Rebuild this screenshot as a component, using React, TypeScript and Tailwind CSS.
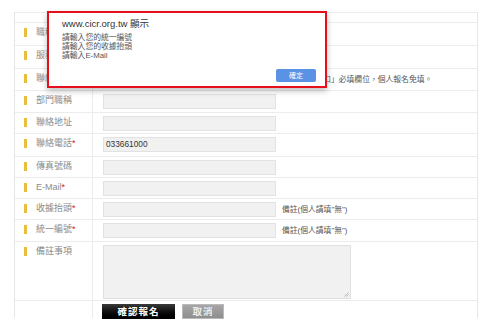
import React from 'react'

interface Row {
  label: string
  required?: boolean
  h: string
  kind: 'input' | 'textarea' | 'none'
  value?: string
  note?: string
}

const rows: Row[] = [
  { label: '職稱', h: 'h-[23px]', kind: 'input' },
  { label: '服務', h: 'h-[23px]', kind: 'input' },
  { label: '聯絡人', h: 'h-[22px]', kind: 'input', note: '※ 有標示「口」必填欄位，個人報名免填。' },
  { label: '部門職稱', h: 'h-[22px]', kind: 'input' },
  { label: '聯絡地址', h: 'h-[21px]', kind: 'input' },
  { label: '聯絡電話', required: true, h: 'h-[23px]', kind: 'input', value: '033661000' },
  { label: '傳真號碼', h: 'h-[21px]', kind: 'input' },
  { label: 'E-Mail', required: true, h: 'h-[21px]', kind: 'input' },
  { label: '收據抬頭', required: true, h: 'h-[21px]', kind: 'input', note: '備註(個人請填"無")' },
  { label: '統一編號', required: true, h: 'h-[22px]', kind: 'input', note: '備註(個人請填"無")' },
  { label: '備註事項', h: 'h-[59px]', kind: 'textarea' },
]

const font = { fontFamily: '"Liberation Sans", "Noto Sans CJK TC", sans-serif' }

export default function App() {
  return (
    <div className="relative w-[498px] h-[329px] bg-white overflow-hidden" style={font}>
      {/* Form table */}
      <div className="ml-[14px] mt-[12px] w-[464px] border-l border-r border-[#e6e6e6]">
        <div className="h-[10px] border-t border-[#ececec]" />
        {rows.map((r) => (
          <div key={r.label} className={`flex border-t border-[#ececec] ${r.h}`}>
            <div className="w-[78px] shrink-0 border-r border-[#ececec] flex items-start pl-[9px] pt-[4px]">
              <span className="w-[3px] h-[9px] bg-[#ebbd3c] mt-[1px]" />
              <span className="ml-[9px] text-[9px] leading-[11px] text-[#8c8c8c]">
                {r.label}
                {r.required && <span className="text-[#e0101c]">*</span>}
              </span>
            </div>
            <div className="flex items-start pl-[10px] pt-[3px]">
              {r.kind === 'input' && (
                <div className="w-[173px] h-[15px] bg-[#f1f1f1] border border-[#e2e2e2] flex items-center pl-[2px] text-[8.3px] text-[#333]">
                  {r.value}
                </div>
              )}
              {r.kind === 'textarea' && (
                <div className="relative w-[248px] h-[54px] bg-[#f1f1f1] border border-[#e0e0e0]">
                  <svg className="absolute right-[1px] bottom-[1px]" width="5" height="5" viewBox="0 0 5 5">
                    <path d="M4.5 0.5 L0.5 4.5 M4.5 2.5 L2.5 4.5" stroke="#aaa" strokeWidth="0.8" />
                  </svg>
                </div>
              )}
              {r.note && (
                <span className="ml-[6px] mt-[2px] text-[7.8px] leading-[11px] text-[#555] whitespace-nowrap">{r.note}</span>
              )}
            </div>
          </div>
        ))}
        <div className="flex border-t border-[#ececec] h-[18px]">
          <div className="w-[78px] shrink-0 border-r border-[#ececec]" />
          <div className="flex items-start pl-[9px] pt-[3px] gap-[7px]">
            <button className="w-[73px] h-[15px] bg-gradient-to-b from-[#3a3a3a] to-[#000] text-white text-[9.5px] font-bold leading-[15px] tracking-[1px]">
              確認報名
            </button>
            <button className="w-[42px] h-[15px] bg-gradient-to-b from-[#a6a6a6] to-[#8e8e8e] border border-[#bbb] text-[#eee] text-[9.5px] font-bold leading-[13px] tracking-[1px]">
              取消
            </button>
          </div>
        </div>
      </div>

      {/* Alert dialog */}
      <div className="absolute left-[47px] top-[11px] w-[280px] h-[77px] bg-white border-2 border-[#e5101c] shadow-[0_3px_6px_rgba(0,0,0,0.25)]">
        <div className="pl-[13px] pt-[5px]">
          <div className="text-[9.5px] leading-[12px] text-[#333]">www.cicr.org.tw 顯示</div>
          <div className="mt-[3px] flex flex-col text-[7.8px] leading-[9px] text-[#555]">
            <span className="h-[9px]">請輸入您的統一編號</span>
            <span className="h-[9px]">請輸入您的收據抬頭</span>
            <span className="h-[9px]">請輸入E-Mail</span>
          </div>
        </div>
        <button className="absolute left-[227px] top-[56px] w-[40px] h-[13px] rounded-[2px] bg-[#5a92e4] text-white text-[7px] leading-[13px]">
          確定
        </button>
      </div>
    </div>
  )
}
